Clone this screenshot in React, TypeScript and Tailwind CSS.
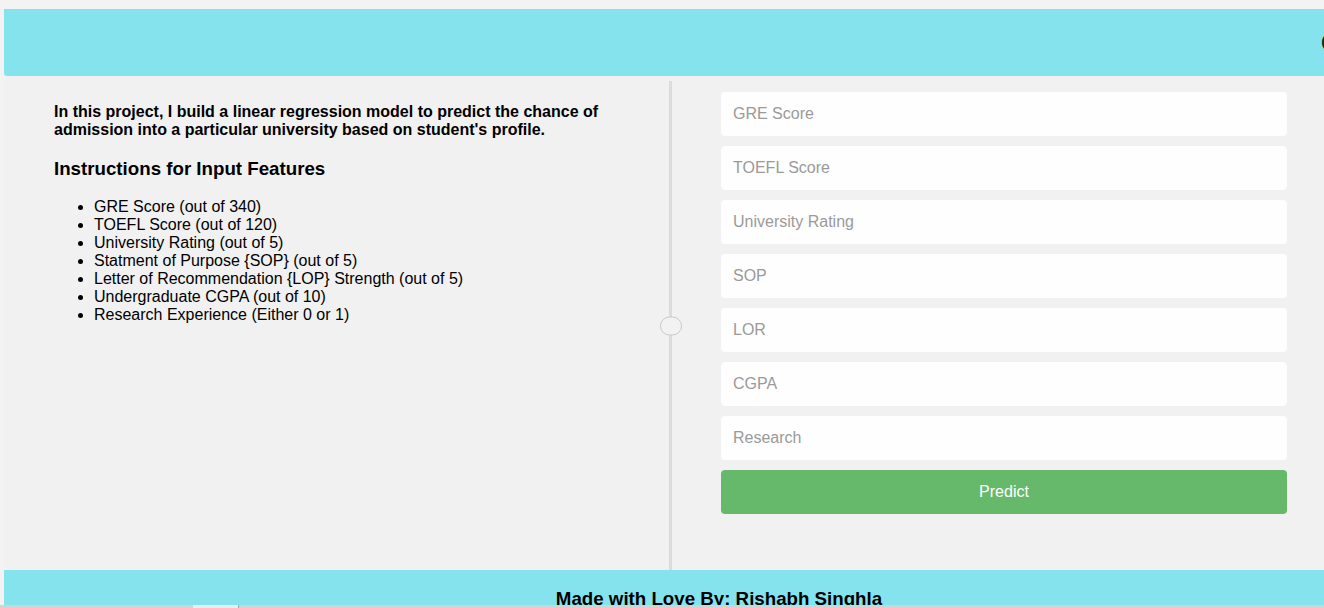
const fields = ['GRE Score', 'TOEFL Score', 'University Rating', 'SOP', 'LOR', 'CGPA', 'Research'];

const instructions = [
  'GRE Score (out of 340)',
  'TOEFL Score (out of 120)',
  'University Rating (out of 5)',
  'Statment of Purpose {SOP} (out of 5)',
  'Letter of Recommendation {LOP} Strength (out of 5)',
  'Undergraduate CGPA (out of 10)',
  'Research Experience (Either 0 or 1)',
];

export default function App() {
  return (
    <div className="flex h-[608px] w-[1324px] flex-col overflow-hidden bg-[#f3f3f3] font-['Liberation_Sans',Arial,sans-serif] text-black">
      <div className="flex-1 overflow-hidden pl-[4px] pt-[9px]">
        {/* header bar */}
        <div className="flex h-[67px] w-[1332px] items-center rounded-bl-[3px] bg-[#84e3ed] pl-[1317px]">
          <h1 className="whitespace-nowrap text-[24px] font-bold text-[#222]">College Admission Predictor</h1>
        </div>

        <div className="flex h-[494px] w-[1332px] rounded-bl-[6px] bg-[#f1f1f1]">
          {/* description */}
          <div className="w-[665px] pl-[50px] pr-[40px] pt-[27px]">
            <p className="text-[16px] font-bold leading-[18px]">
              In this project, I build a linear regression model to predict the chance of admission into a particular
              university based on student's profile.
            </p>
            <h3 className="mt-[19px] text-[18.72px] font-bold leading-[21px]">Instructions for Input Features</h3>
            <ul className="mt-[19px] list-disc pl-[40px] text-[16px] leading-[18px]">
              {instructions.map(item => (
                <li key={item}>{item}</li>
              ))}
            </ul>
          </div>

          {/* divider with handle */}
          <div className="relative mt-[5px] w-[3px] bg-[#dcdcdc]">
            <div className="absolute left-1/2 top-1/2 h-[19px] w-[22px] -translate-x-1/2 -translate-y-1/2 rounded-full border border-[#c9c9c9] bg-[#f2f2f2]" />
          </div>

          {/* form */}
          <div className="flex flex-1 flex-col items-center gap-[10px] pt-[16px]">
            {fields.map(name => (
              <input
                key={name}
                type="text"
                placeholder={name}
                className="h-[44px] w-[566px] rounded-[4px] bg-[#fefefe] px-[12px] text-[16px] outline-none placeholder:text-[#9a9a9a]"
              />
            ))}
            <button className="h-[44px] w-[566px] rounded-[4px] bg-[#66b96a] text-[16px] text-white">Predict</button>
          </div>
        </div>

        {/* footer */}
        <div className="h-[35px] w-[1430px] bg-[#84e3ed] pt-[18px] text-center">
          <span className="whitespace-nowrap text-[18.72px] font-bold leading-[21px]">Made with Love By: Rishabh Singhla</span>
        </div>
      </div>

      {/* scrollbar strip */}
      <div className="flex h-[3px] shrink-0 bg-[#d3d3d3]">
        <div className="ml-[193px] w-[45px] bg-[#ececec]" />
        <div className="w-[1px] bg-[#a8a8a8]" />
      </div>
    </div>
  );
}
